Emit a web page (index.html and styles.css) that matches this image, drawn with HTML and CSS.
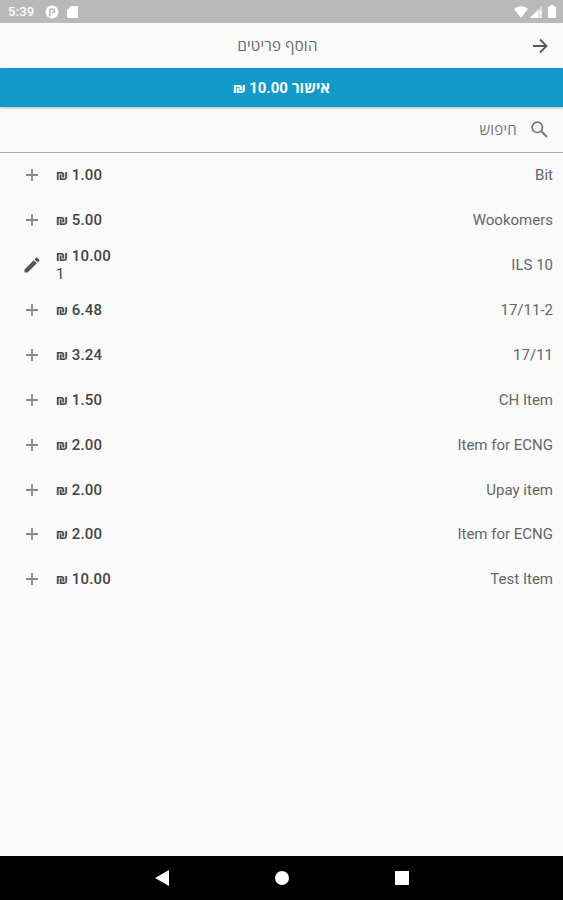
FILE: index.html
```
<!DOCTYPE html>
<html lang="he" dir="rtl">
<head>
    <meta charset="UTF-8">
    <meta name="viewport" content="width=device-width, initial-scale=1.0">
    <title>הוסף פריטים</title>
    <link rel="stylesheet" href="styles.css">
</head>
<body>
    <svg class="defs" width="0" height="0">
        <symbol id="plus" viewBox="0 0 14 14">
            <path d="M7 1v12M1 7h12" fill="none" stroke="currentColor" stroke-width="1.8"/>
        </symbol>
        <symbol id="pencil" viewBox="0 0 24 24">
            <path d="M3 17.25V21h3.75L17.81 9.94l-3.75-3.75L3 17.25zM20.71 7.04a1 1 0 0 0 0-1.41l-2.34-2.34a1 1 0 0 0-1.41 0l-1.83 1.83 3.75 3.75 1.83-1.83z" fill="currentColor"/>
        </symbol>
    </svg>

    <div class="status-bar" dir="ltr">
        <span class="clock">5:39</span>
        <svg class="status-app" width="14" height="14" viewBox="0 0 14 14">
            <circle cx="7" cy="7" r="6.5" fill="#fff"/>
            <path d="M5 11.500V4.300h5M9.300 4v3.500H7" fill="none" stroke="#b9b9b9" stroke-width="1.6"/>
        </svg>
        <svg class="status-card" width="11" height="12" viewBox="0 0 11 12">
            <path d="M4 0h6a1 1 0 0 1 1 1v10a1 1 0 0 1-1 1H1a1 1 0 0 1-1-1V4z" fill="#fff"/>
        </svg>
        <svg class="status-wifi" width="14" height="12" viewBox="0 0 14 12">
            <path d="M0 3C4-.7 10-.7 14 3L7 12z" fill="#fff"/>
        </svg>
        <svg class="status-signal" width="12" height="12" viewBox="0 0 12 12">
            <path d="M0 12L12 0v12z" fill="#fff" fill-opacity=".55"/>
            <path d="M0 12L8 4v8zM10 5h1.5v4H10zM10 10.5h1.5V12H10z" fill="#fff"/>
        </svg>
        <svg class="status-battery" width="8" height="13" viewBox="0 0 8 13">
            <path d="M2.5 0h3v1.5H7a1 1 0 0 1 1 1V12a1 1 0 0 1-1 1H1a1 1 0 0 1-1-1V2.500a1 1 0 0 1 1-1h1.500z" fill="#fff"/>
        </svg>
    </div>

    <header class="header">
        <svg class="back" width="16" height="16" viewBox="0 0 16 16">
            <path d="M1 8h13.500M8 1.500L14.500 8 8 14.500" fill="none" stroke="currentColor" stroke-width="1.800"/>
        </svg>
        <h1>הוסף פריטים</h1>
    </header>

    <button class="confirm">אישור <span dir="ltr"><span class="shekel">₪</span> 10.00</span></button>

    <div class="search">
        <svg width="17" height="17" viewBox="0 0 17 17">
            <circle cx="6.300" cy="6.300" r="5.200" fill="none" stroke="currentColor" stroke-width="1.700"/>
            <path d="M10 10l6 6" fill="none" stroke="currentColor" stroke-width="2"/>
        </svg>
        <span>חיפוש</span>
    </div>

    <ul class="items" dir="ltr">
        <li>
            <svg class="plus"><use href="#plus"/></svg>
            <div class="price"><span class="shekel">₪</span> 1.00</div>
            <div class="name">Bit</div>
        </li>
        <li>
            <svg class="plus"><use href="#plus"/></svg>
            <div class="price"><span class="shekel">₪</span> 5.00</div>
            <div class="name">Wookomers</div>
        </li>
        <li>
            <svg class="pencil"><use href="#pencil"/></svg>
            <div class="price"><span class="shekel">₪</span> 10.00<div class="count">1</div></div>
            <div class="name">ILS 10</div>
        </li>
        <li>
            <svg class="plus"><use href="#plus"/></svg>
            <div class="price"><span class="shekel">₪</span> 6.48</div>
            <div class="name">17/11-2</div>
        </li>
        <li>
            <svg class="plus"><use href="#plus"/></svg>
            <div class="price"><span class="shekel">₪</span> 3.24</div>
            <div class="name">17/11</div>
        </li>
        <li>
            <svg class="plus"><use href="#plus"/></svg>
            <div class="price"><span class="shekel">₪</span> 1.50</div>
            <div class="name">CH Item</div>
        </li>
        <li>
            <svg class="plus"><use href="#plus"/></svg>
            <div class="price"><span class="shekel">₪</span> 2.00</div>
            <div class="name">Item for ECNG</div>
        </li>
        <li>
            <svg class="plus"><use href="#plus"/></svg>
            <div class="price"><span class="shekel">₪</span> 2.00</div>
            <div class="name">Upay item</div>
        </li>
        <li>
            <svg class="plus"><use href="#plus"/></svg>
            <div class="price"><span class="shekel">₪</span> 2.00</div>
            <div class="name">Item for ECNG</div>
        </li>
        <li>
            <svg class="plus"><use href="#plus"/></svg>
            <div class="price"><span class="shekel">₪</span> 10.00</div>
            <div class="name">Test Item</div>
        </li>
    </ul>

    <nav class="nav-bar" dir="ltr">
        <svg width="16" height="18" viewBox="0 0 16 18"><path d="M15 1v16L1 9z" fill="#fff"/></svg>
        <svg width="16" height="18" viewBox="0 0 16 18"><circle cx="8" cy="9" r="7" fill="#fff"/></svg>
        <svg width="16" height="18" viewBox="0 0 16 18"><path d="M1 2h14v14H1z" fill="#fff"/></svg>
    </nav>
</body>
</html>
```
FILE: styles.css
```
* {
    box-sizing: border-box;
}
body {
    margin: 0;
    height: 100vh;
    display: flex;
    flex-direction: column;
    overflow: hidden;
    background: #fafafa;
    color: #666;
    font-family: Roboto, "Open Sans", sans-serif;
    font-size: 15px;
}
svg {
    flex: none;
}
.defs {
    position: absolute;
}
.status-bar {
    height: 23px;
    display: flex;
    align-items: center;
    padding: 0 7px 0 8px;
    background: #b9b9b9;
    color: #fff;
}
.clock {
    width: 37px;
    font-size: 13px;
    font-weight: 500;
    letter-spacing: 0.2px;
}
.status-card {
    margin-left: 8px;
}
.status-wifi {
    margin-left: auto;
}
.status-signal {
    margin-left: 2px;
}
.status-battery {
    margin-left: 6px;
}
.header {
    height: 45px;
    display: flex;
    align-items: center;
    padding-right: 15px;
}
.back {
    color: #555;
}
.header h1 {
    margin: 0;
    flex: 1;
    padding: 0 0 2px 23px;
    text-align: center;
    font-size: 15px;
    font-weight: 400;
    letter-spacing: 0.25px;
}
.confirm {
    height: 39px;
    padding: 0 0 1px;
    border: 0;
    background: #1199c9;
    box-shadow: 0 1px 2px rgba(0, 0, 0, 0.3);
    color: #fff;
    font-family: inherit;
    font-size: 15px;
    font-weight: 700;
}
.shekel {
    font-size: 0.95em;
    letter-spacing: 0;
}
.search {
    height: 46px;
    display: flex;
    align-items: center;
    gap: 14px;
    padding-right: 15px;
    border-bottom: 1px solid #aaa;
    color: #757575;
}
.search span {
    padding-bottom: 2px;
    letter-spacing: 0.25px;
}
.items {
    flex: 1;
    margin: 0;
    padding: 0;
    list-style: none;
}
.items li {
    height: 44.95px;
    display: flex;
    align-items: center;
    padding: 0 10px 1px 24px;
}
.plus {
    width: 14px;
    height: 14px;
    margin: 0 9px 0 1px;
    color: #888;
}
.pencil {
    width: 20px;
    height: 20px;
    margin: 0 6px 0 -2px;
    color: #555;
}
.price {
    flex: 1;
    padding-left: 8px;
    color: #444;
    font-weight: 500;
    line-height: 18px;
    letter-spacing: 0.2px;
}
.count {
    font-weight: 400;
}
.nav-bar {
    height: 44px;
    display: flex;
    align-items: center;
    justify-content: center;
    gap: 104px;
    background: #000;
}
```
